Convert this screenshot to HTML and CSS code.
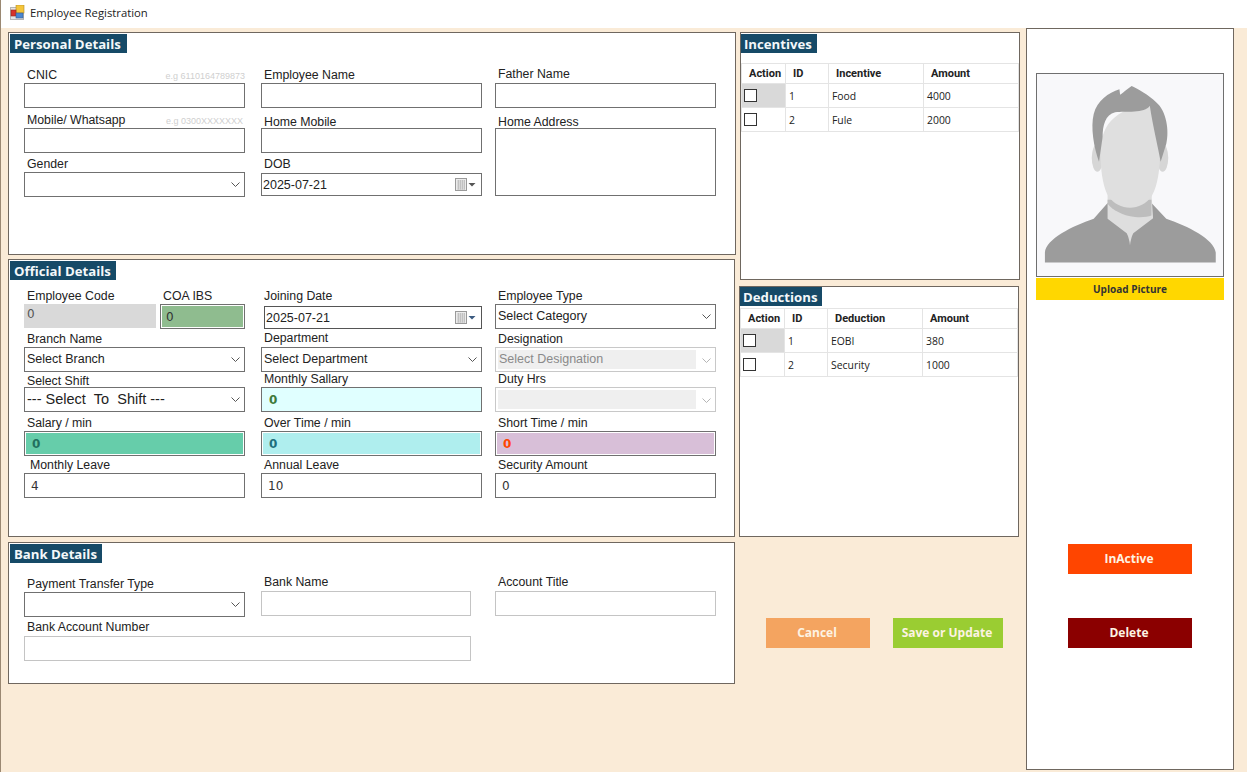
FILE: index.html
```html
<!DOCTYPE html>
<html>

<head>
    <title>Employee Registration</title>
    <link rel="stylesheet" href="styles.css">
</head>

<body>
    <div class="titlebar">
        <svg class="app-icon" width="15" height="15" viewBox="0 0 15 15">
            <rect x="0.5" y="2.5" width="13" height="12" fill="#e4e4e4" stroke="#b5b5b5" />
            <rect x="6" y="0" width="8" height="8" fill="#f5c53a" stroke="#b08a2a" stroke-width="0.6" />
            <rect x="1" y="5" width="5" height="6" fill="#d8322a" stroke="#8a2a20" stroke-width="0.6" />
            <rect x="6" y="8" width="7" height="5" fill="#4a86d0" stroke="#3a5f90" stroke-width="0.6" />
        </svg>
        <span>Employee Registration</span>
    </div>

    <div class="main">
        <div class="left-col">
            <!-- Personal -->
            <div class="panel personal">
                <div class="panel-title">Personal Details</div>
                <div class="fields personal-rows">
                    <div class="field">
                        <div class="label"><span>CNIC</span><span class="hint">e.g 6110164789873</span></div>
                        <div class="box"></div>
                    </div>
                    <div class="field">
                        <div class="label">Employee Name</div>
                        <div class="box"></div>
                    </div>
                    <div class="field">
                        <div class="label up">Father Name</div>
                        <div class="box"></div>
                    </div>

                    <div class="field">
                        <div class="label"><span>Mobile/ Whatsapp</span><span class="hint hint-short">e.g 0300XXXXXXX</span></div>
                        <div class="box"></div>
                    </div>
                    <div class="field">
                        <div class="label down">Home Mobile</div>
                        <div class="box"></div>
                    </div>
                    <div class="field span-rows">
                        <div class="label down">Home Address</div>
                        <div class="box textarea"></div>
                    </div>

                    <div class="field">
                        <div class="label">Gender</div>
                        <div class="box combo"><span></span><svg class="chevron" width="9" height="6" viewBox="0 0 9 6"><path d="M.5 .5 4.500 4.500 8.500 .5" /></svg></div>
                    </div>
                    <div class="field">
                        <div class="label up">DOB</div>
                        <div class="box date">
                            <span>2025-07-21</span>
                            <svg class="cal" width="21" height="14" viewBox="0 0 21 14"><rect x=".5" y=".5" width="11" height="12" fill="#ececec" stroke="#9a9a9a" /><path d="M2 3h8M2 5h8M2 7h8M2 9h8M2 11h8M3.500 2v9.500M5.500 2v9.500M7.500 2v9.500M9.500 2v9.500" stroke="#b0b0b0" stroke-width=".6" /><path d="M13.500 5h7L17 8.500z" fill="#555" /></svg>
                        </div>
                    </div>
                </div>
            </div>

            <!-- Official -->
            <div class="panel official">
                <div class="panel-title">Official Details</div>
                <div class="fields official-rows">
                    <div class="field field-pair">
                        <div class="field code">
                            <div class="label">Employee Code</div>
                            <div class="box readonly">0</div>
                        </div>
                        <div class="field coa">
                            <div class="label">COA IBS</div>
                            <div class="box fill fill-coa">0</div>
                        </div>
                    </div>
                    <div class="field">
                        <div class="label up2">Joining Date</div>
                        <div class="box date joining">
                            <span>2025-07-21</span>
                            <svg class="cal" width="21" height="14" viewBox="0 0 21 14"><rect x=".5" y=".5" width="11" height="12" fill="#ececec" stroke="#9a9a9a" /><path d="M2 3h8M2 5h8M2 7h8M2 9h8M2 11h8M3.500 2v9.500M5.500 2v9.500M7.500 2v9.500M9.500 2v9.500" stroke="#b0b0b0" stroke-width=".6" /><path d="M13.500 5h7L17 8.500z" fill="#3b5a80" /></svg>
                        </div>
                    </div>
                    <div class="field">
                        <div class="label">Employee Type</div>
                        <div class="box combo"><span>Select Category</span><svg class="chevron" width="9" height="6" viewBox="0 0 9 6"><path d="M.5 .5 4.500 4.500 8.500 .5" /></svg></div>
                    </div>

                    <div class="field">
                        <div class="label">Branch Name</div>
                        <div class="box combo"><span>Select Branch</span><svg class="chevron" width="9" height="6" viewBox="0 0 9 6"><path d="M.5 .5 4.500 4.500 8.500 .5" /></svg></div>
                    </div>
                    <div class="field">
                        <div class="label up">Department</div>
                        <div class="box combo"><span>Select Department</span><svg class="chevron" width="9" height="6" viewBox="0 0 9 6"><path d="M.5 .5 4.500 4.500 8.500 .5" /></svg></div>
                    </div>
                    <div class="field">
                        <div class="label">Designation</div>
                        <div class="box combo disabled"><span>Select Designation</span><svg class="chevron" width="9" height="6" viewBox="0 0 9 6"><path d="M.5 .5 4.500 4.500 8.500 .5" /></svg></div>
                    </div>

                    <div class="field">
                        <div class="label down">Select Shift</div>
                        <div class="box combo shift"><span>--- Select &nbsp;To &nbsp;Shift ---</span><svg class="chevron" width="9" height="6" viewBox="0 0 9 6"><path d="M.5 .5 4.500 4.500 8.500 .5" /></svg></div>
                    </div>
                    <div class="field">
                        <div class="label">Monthly Sallary</div>
                        <div class="box number fill-salary">0</div>
                    </div>
                    <div class="field">
                        <div class="label">Duty Hrs</div>
                        <div class="box combo disabled"><span></span><svg class="chevron" width="9" height="6" viewBox="0 0 9 6"><path d="M.5 .5 4.500 4.500 8.500 .5" /></svg></div>
                    </div>

                    <div class="field">
                        <div class="label">Salary / min</div>
                        <div class="box number fill fill-min">0</div>
                    </div>
                    <div class="field">
                        <div class="label">Over Time / min</div>
                        <div class="box number fill fill-over">0</div>
                    </div>
                    <div class="field">
                        <div class="label">Short Time / min</div>
                        <div class="box number fill fill-short">0</div>
                    </div>

                    <div class="field">
                        <div class="label indent">Monthly Leave</div>
                        <div class="box value">4</div>
                    </div>
                    <div class="field">
                        <div class="label">Annual Leave</div>
                        <div class="box value">10</div>
                    </div>
                    <div class="field">
                        <div class="label">Security Amount</div>
                        <div class="box value">0</div>
                    </div>
                </div>
            </div>

            <!-- Bank -->
            <div class="panel bank">
                <div class="panel-title">Bank Details</div>
                <div class="fields bank-rows">
                    <div class="field">
                        <div class="label">Payment Transfer Type</div>
                        <div class="box combo"><span></span><svg class="chevron" width="9" height="6" viewBox="0 0 9 6"><path d="M.5 .5 4.500 4.500 8.500 .5" /></svg></div>
                    </div>
                    <div class="field bank-name">
                        <div class="label up">Bank Name</div>
                        <div class="box pale"></div>
                    </div>
                    <div class="field bank-title">
                        <div class="label up">Account Title</div>
                        <div class="box pale"></div>
                    </div>
                    <div class="field account-no">
                        <div class="label up">Bank Account Number</div>
                        <div class="box pale"></div>
                    </div>
                </div>
            </div>
        </div>

        <div class="mid-col">
            <div class="panel incentives">
                <div class="panel-title">Incentives</div>
                <table class="grid">
                    <tr>
                        <th class="col-action">Action</th>
                        <th class="col-id">ID</th>
                        <th class="col-name">Incentive</th>
                        <th>Amount</th>
                    </tr>
                    <tr>
                        <td class="selected"><span class="check"></span></td>
                        <td>1</td>
                        <td>Food</td>
                        <td>4000</td>
                    </tr>
                    <tr>
                        <td><span class="check"></span></td>
                        <td>2</td>
                        <td>Fule</td>
                        <td>2000</td>
                    </tr>
                </table>
            </div>

            <div class="panel deductions">
                <div class="panel-title">Deductions</div>
                <table class="grid">
                    <tr>
                        <th class="col-action">Action</th>
                        <th class="col-id">ID</th>
                        <th class="col-name">Deduction</th>
                        <th>Amount</th>
                    </tr>
                    <tr>
                        <td class="selected"><span class="check"></span></td>
                        <td>1</td>
                        <td>EOBI</td>
                        <td>380</td>
                    </tr>
                    <tr>
                        <td><span class="check"></span></td>
                        <td>2</td>
                        <td>Security</td>
                        <td>1000</td>
                    </tr>
                </table>
            </div>

            <div class="actions">
                <button class="btn cancel">Cancel</button>
                <button class="btn save">Save or Update</button>
            </div>
        </div>

        <div class="photo-panel">
            <div class="photo">
                <svg width="186" height="202" viewBox="33 40 564 610">
                    <path fill="#9c9c9c" d="M57 610V580C60 540 140 500 205 478L247 430H380L425 478C490 500 570 540 575 580V610Z" />
                    <path fill="#dedede" d="M247 400V478L305 522Q312 535 315 558Q318 535 325 522L385 476L380 400Z" />
                    <path fill="#bdbdbd" d="M247 420V432C262 450 290 468 330 472C350 474 368 472 380 468V420Z" />
                    <ellipse cx="216" cy="293" rx="17" ry="42" fill="#d6d6d6" />
                    <ellipse cx="414" cy="293" rx="17" ry="42" fill="#d6d6d6" />
                    <path fill="#dfdfdf" d="M226 300C222 220 240 150 375 130C400 190 408 250 405 310C402 350 395 385 380 410C365 432 340 444 315 444C290 444 265 432 250 410C235 385 228 345 226 300Z" />
                    <path fill="#9c9c9c" d="M221 305C205 260 195 200 205 160C215 120 250 95 283 85L285 102C295 95 305 85 320 75C340 85 370 100 395 125C425 150 435 210 425 250L408 305C400 260 385 200 375 135C360 160 300 150 270 155C240 162 232 195 232 230Z" />
                </svg>
            </div>
            <button class="upload">Upload Picture</button>
            <button class="btn side inactive">InActive</button>
            <button class="btn side delete">Delete</button>
        </div>
    </div>
</body>

</html>
```

FILE: styles.css
```css
* {
    box-sizing: border-box;
}

html,
body {
    margin: 0;
    height: 772px;
    overflow: hidden;
}

body {
    font-family: "Liberation Sans", Arial, sans-serif;
    font-size: 12.5px;
    color: #222;
    background-color: #faebd7;
    border-left: 1px solid #9a8872;
}

.titlebar {
    display: flex;
    align-items: center;
    height: 28px;
    padding: 0 0 4px 9px;
    background-color: #fff;
    font-family: "Open Sans", sans-serif;
    font-size: 11.300px;
    color: #222;
}

.app-icon {
    margin-right: 5px;
}

.main {
    display: flex;
    height: 744px;
    padding-left: 7px;
}

.left-col {
    width: 731px;
    padding-top: 4px;
}

.panel {
    background-color: #fff;
    border: 1px solid #6f675f;
}

.panel-title {
    display: inline-block;
    vertical-align: top;
    height: 19px;
    margin: 1px 0 0 1px;
    padding: 0 5px 0 4px;
    background-color: #164a67;
    color: #f4f8fa;
    font-family: "Open Sans", sans-serif;
    font-size: 13.200px;
    font-weight: 700;
    line-height: 20px;
}

.mid-col .panel-title {
    margin-left: 0;
    padding-left: 3px;
}

.personal {
    width: 728px;
    height: 223px;
}

.personal .panel-title {
    padding-right: 6px;
}

.official {
    width: 727px;
    height: 278px;
    margin-top: 4px;
}

.bank {
    width: 727px;
    height: 142px;
    margin-top: 5px;
}

/* form grid, boxes sit on the bottom of each row */
.fields {
    display: grid;
    grid-template-columns: 237px 234px 221px;
    align-items: end;
    margin: 7px 0 0 15px;
}

.personal-rows {
    grid-template-rows: 48px 45px 44px;
}

.official-rows {
    grid-template-rows: 42px 43px 40px 44px 42px;
}

.bank-rows {
    grid-template-rows: 47px 44px;
}

.field {
    width: 221px;
}

.span-rows {
    grid-row: span 2;
    margin-bottom: 1px;
}

.field-pair {
    display: flex;
    align-items: flex-end;
    gap: 4px;
}

.code {
    width: 132px;
}

.coa {
    width: 85px;
}

.bank-name {
    width: 210px;
    margin-bottom: 1px;
}

.bank-title {
    margin-bottom: 1px;
}

.account-no {
    grid-column: 1 / 3;
    width: 447px;
}

.label {
    display: flex;
    justify-content: space-between;
    align-items: flex-end;
    height: 14px;
    margin-bottom: 1px;
    padding-left: 3px;
    font-size: 12.300px;
    line-height: 14px;
    white-space: nowrap;
}

.label.up {
    margin-bottom: 2px;
}

.label.up2 {
    margin-bottom: 3px;
}

.label.down {
    margin-bottom: -1px;
}

.label.indent {
    padding-left: 6px;
}

.hint {
    font-size: 9px;
    line-height: 12px;
    color: #cfcfcf;
}

.hint-short {
    padding-right: 2px;
}

.box {
    display: flex;
    align-items: center;
    height: 25px;
    padding-left: 3px;
    background-color: #fff;
    border: 1px solid #707070;
    overflow: hidden;
    white-space: nowrap;
}

.textarea {
    height: 68px;
}

.combo {
    justify-content: space-between;
    padding-left: 2px;
    padding-right: 4px;
    padding-bottom: 2px;
}

.chevron {
    flex: none;
    margin-top: 3px;
    fill: none;
    stroke: #555;
}

.shift {
    font-size: 14.500px;
}

.date {
    justify-content: space-between;
    height: 23px;
    margin-bottom: 1px;
    padding-left: 1px;
    padding-right: 5px;
}

.cal {
    flex: none;
}

.joining {
    margin-left: 3px;
    width: 218px;
    margin-bottom: 0;
    border-color: #555;
}

.disabled {
    padding-left: 2px;
    padding-right: 4px;
    padding-bottom: 0;
    border-color: #c8c8c8;
    color: #8a8a8a;
}

.disabled span {
    flex: 1;
    height: 19px;
    margin-right: 6px;
    padding-left: 1px;
    line-height: 18px;
    background-color: #efefef;
}

.disabled .chevron {
    stroke: #b5b5b5;
}

.readonly {
    height: 24px;
    margin-bottom: 1px;
    padding-bottom: 4px;
    background-color: #d9d9d9;
    border: none;
    color: #555;
    font-family: "DejaVu Sans", sans-serif;
    font-size: 12px;
}

.number,
.value,
.fill-coa {
    font-family: "DejaVu Sans", sans-serif;
    font-size: 12px;
}

.number {
    padding-left: 7px;
    font-weight: 700;
}

.value {
    padding-left: 6px;
    color: #333;
}

.fill {
    box-shadow: inset 0 0 0 1px #fff;
}

.fill-coa {
    padding-left: 5px;
    background-color: #8fbc8f;
    color: #333;
}

.fill-salary {
    background-color: #e0ffff;
    color: #3f7a3a;
}

.fill-min {
    background-color: #66cdaa;
    color: #22705f;
}

.fill-over {
    background-color: #afeeee;
    color: #1e6f7c;
}

.fill-short {
    background-color: #d8bfd8;
    color: #ff4500;
}

.pale {
    border-color: #c4c4c4;
}

/* middle column */
.mid-col {
    width: 287px;
    padding-top: 4px;
}

.incentives {
    width: 280px;
    height: 248px;
    margin-left: 1px;
}

.deductions {
    width: 280px;
    height: 251px;
    margin-top: 6px;
}

.deductions .panel-title {
    margin-top: 0;
}

.incentives .grid {
    margin-top: 10px;
}

.deductions .grid {
    margin-top: 2px;
}

.grid {
    width: 278px;
    border-collapse: collapse;
    table-layout: fixed;
    font-family: "Open Sans", sans-serif;
    font-size: 10.400px;
    color: #222;
}

.grid th,
.grid td {
    padding: 0 0 0 3px;
    border: 1px solid #e4e4e4;
    text-align: left;
}

.grid th {
    height: 20px;
    padding-left: 7px;
    font-family: Roboto, sans-serif;
    font-size: 11px;
    font-weight: 700;
}

.grid td {
    height: 24px;
}

.col-action {
    width: 44px;
}

.col-id {
    width: 43px;
}

.col-name {
    width: 95px;
}

.grid .selected {
    background-color: #d9d9d9;
}

.grid td:first-child {
    padding-left: 2px;
}

.check {
    display: block;
    width: 13px;
    height: 13px;
    background-color: #fff;
    border: 1px solid #333;
}

.btn {
    display: block;
    height: 30px;
    padding: 0 2px 2px 0;
    border: none;
    color: #fdf3e3;
    font-family: "Open Sans", sans-serif;
    font-size: 12px;
    font-weight: 700;
}

.actions {
    display: flex;
    gap: 23px;
    margin: 81px 0 0 27px;
}

.cancel {
    width: 104px;
    background-color: #f4a460;
}

.save {
    width: 110px;
    background-color: #9acd32;
}

/* picture panel */
.photo-panel {
    display: flex;
    flex-direction: column;
    align-items: center;
    width: 208px;
    height: 742px;
    padding-top: 44px;
    background-color: #fff;
    border: 1px solid #6f675f;
}

.photo {
    width: 188px;
    height: 204px;
    background-color: #f8f8fa;
    border: 1px solid #6f6f6f;
}

.photo svg {
    display: block;
}

.upload {
    width: 188px;
    height: 22px;
    margin-top: 1px;
    padding: 0;
    background-color: #ffd700;
    border: none;
    color: #333;
    font-family: "Open Sans", sans-serif;
    font-size: 10px;
    font-weight: 700;
}

.side {
    width: 124px;
}

.inactive {
    margin-top: 244px;
    background-color: #ff4500;
}

.delete {
    margin-top: 44px;
    background-color: #8b0000;
}
```
